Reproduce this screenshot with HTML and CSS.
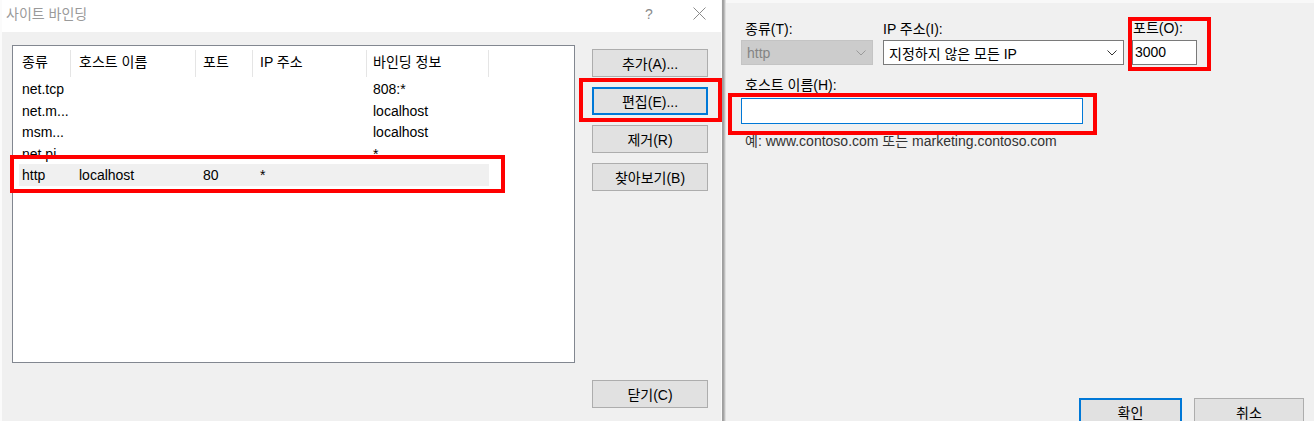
FILE: index.html
```html
<!DOCTYPE html>
<html lang="ko">
<head>
<meta charset="utf-8">
<title>사이트 바인딩</title>
<link rel="stylesheet" href="styles.css">
</head>
<body>
<div class="screen">
  <section class="win-left">
    <header class="titlebar">
      <span class="title">사이트 바인딩</span>
      <div class="title-ctrls">
        <span class="help">?</span>
        <svg class="close-x" width="13" height="13" viewBox="0 0 13 13"><path d="M0.5 0.5 L12.5 12.5 M12.5 0.5 L0.5 12.5"/></svg>
      </div>
    </header>
    <div class="left-body">
      <div class="listbox">
        <div class="lv-head">
          <div class="hcell">종류</div>
          <div class="hcell">호스트 이름</div>
          <div class="hcell">포트</div>
          <div class="hcell">IP 주소</div>
          <div class="hcell">바인딩 정보</div>
        </div>
        <div class="lv-row"><span>net.tcp</span><span></span><span></span><span></span><span>808:*</span></div>
        <div class="lv-row"><span>net.m...</span><span></span><span></span><span></span><span>localhost</span></div>
        <div class="lv-row"><span>msm...</span><span></span><span></span><span></span><span>localhost</span></div>
        <div class="lv-row"><span>net.pi</span><span></span><span></span><span></span><span>*</span></div>
        <div class="lv-row lv-sel"><span>http</span><span>localhost</span><span>80</span><span>*</span><span></span></div>
      </div>
      <div class="btn-col">
        <button class="btn">추가(A)...</button>
        <button class="btn btn-focus">편집(E)...</button>
        <button class="btn">제거(R)</button>
        <button class="btn">찾아보기(B)</button>
      </div>
      <div class="close-cell">
        <button class="btn">닫기(C)</button>
      </div>
    </div>
  </section>
  <div class="win-sep"></div>
  <section class="win-right">
    <div class="field-row">
      <div class="field f-type">
        <label class="lbl lbl-type">종류(T):</label>
        <div class="select select-disabled">
          <span>http</span>
          <svg class="chev" width="10" height="6" viewBox="0 0 10 6"><polyline points="0.5,0.5 5,5 9.5,0.5"/></svg>
        </div>
      </div>
      <div class="field f-ip">
        <label class="lbl">IP 주소(I):</label>
        <div class="select">
          <span>지정하지 않은 모든 IP</span>
          <svg class="chev" width="10" height="6" viewBox="0 0 10 6"><polyline points="0.5,0.5 5,5 9.5,0.5"/></svg>
        </div>
      </div>
      <div class="field f-port">
        <label class="lbl lbl-port">포트(O):</label>
        <div class="textbox">3000</div>
      </div>
    </div>
    <label class="lbl lbl-host">호스트 이름(H):</label>
    <div class="textbox host-box"></div>
    <p class="example">예: www.contoso.com 또는 marketing.contoso.com</p>
    <div class="dlg-buttons">
      <button class="btn btn-focus btn-ok">확인</button>
      <button class="btn btn-cancel">취소</button>
    </div>
  </section>

  <div class="mark mark-row"></div>
  <div class="mark mark-edit"></div>
  <div class="mark mark-port"></div>
  <div class="mark mark-host"></div>
</div>
</body>
</html>
```

FILE: styles.css
```css
* { box-sizing: border-box; }

body {
  margin: 0;
  font-family: "Liberation Sans", "Noto Sans CJK KR", sans-serif;
  font-size: 14px;
  color: #000;
  overflow: hidden;
}

.screen {
  position: relative;
  display: flex;
  width: 1314px;
  height: 421px;
  overflow: hidden;
}

/* ---------- left window ---------- */
.win-left {
  width: 721px;
  flex: none;
  border-left: 2px solid #fbfbfb;
  background: #f0f0f0;
  display: flex;
  flex-direction: column;
}

.titlebar {
  height: 32px;
  flex: none;
  background: #fff;
  display: flex;
  justify-content: space-between;
  align-items: flex-start;
  padding-left: 4px;
  padding-right: 15px;
}

.title {
  margin-top: 5px;
  line-height: 18px;
  color: #9a9a9a;
  font-size: 14px;
}

.title-ctrls {
  display: flex;
  align-items: flex-start;
  gap: 40px;
  margin-top: 7px;
}

.help {
  font-size: 14px;
  line-height: 14px;
  color: #8a8a8a;
  width: 8px;
}

.close-x {
  display: block;
  fill: none;
  stroke: #8a8a8a;
  stroke-width: 1;
}

.left-body {
  display: grid;
  grid-template-columns: 563px 116px;
  grid-template-rows: 318px auto;
  column-gap: 17px;
  row-gap: 17px;
  padding: 13px 0 0 10px;
}

.listbox {
  background: #fff;
  border: 1px solid #828790;
  overflow: hidden;
}

.lv-head {
  display: grid;
  grid-template-columns: 58px 125px 57px 114px 122px;
  height: 32px;
}

.hcell {
  margin-top: 4px;
  height: 27px;
  line-height: 24px;
  padding-left: 8px;
  border-right: 1px solid #e5e5e5;
  white-space: nowrap;
}

.hcell:first-child { padding-left: 9px; }
.hcell:nth-child(3), .hcell:nth-child(4) { padding-left: 7px; }
.hcell:nth-child(5) { padding-left: 6px; }

.lv-row {
  display: grid;
  grid-template-columns: 52px 125px 57px 114px 122px;
  margin-left: 6px;
  width: 470px;
  height: 21.5px;
  line-height: 22px;
}

.lv-row span { white-space: nowrap; padding-left: 7px; }
.lv-row span:first-child { padding-left: 3px; }
.lv-row span:nth-child(2) { padding-left: 8px; }
.lv-row span:nth-child(5) { padding-left: 6px; }

.lv-sel { background: #f0f0f0; }

.btn-col {
  display: flex;
  flex-direction: column;
  gap: 10px;
  padding-top: 4px;
}

.btn {
  height: 28px;
  width: 116px;
  padding: 0;
  background: #e1e1e1;
  border: 1px solid #adadad;
  font-family: "Liberation Sans", "Noto Sans CJK KR", sans-serif;
  font-size: 14px;
  color: #000;
}

.btn-focus { border: 2px solid #0078d7; }

.close-cell { grid-column: 2; }

/* ---------- separator ---------- */
.win-sep {
  width: 5px;
  flex: none;
  background: linear-gradient(to right, #fafafa 0, #fafafa 1px, #9c9c9c 1px, #a8a8a8 3px, #d6d6d6 4px, #e6e6e6 5px);
}

/* ---------- right window ---------- */
.win-right {
  flex: 1;
  background: #f0f0f0;
  border-top: 3px solid #f8f8f8;
  display: flex;
  flex-direction: column;
  align-items: flex-start;
  padding-left: 15px;
  padding-right: 10px;
}

.field-row {
  display: flex;
  margin-top: 17px;
}

.field { display: flex; flex-direction: column; }
.f-type { width: 132px; }
.f-ip { width: 241px; margin-left: 10px; }
.f-port { width: 65px; margin-left: 8px; }

.lbl {
  line-height: 18px;
  height: 18px;
  white-space: nowrap;
  margin-bottom: 2px;
}

.lbl-type { padding-left: 4px; }
.lbl-port { padding-left: 1px; margin-top: -1px; margin-bottom: 3px; }

.select {
  height: 25px;
  display: flex;
  align-items: center;
  justify-content: space-between;
  padding: 0 6px 0 5px;
  background: #fff;
  border: 1px solid #7a7a7a;
  white-space: nowrap;
}

.select-disabled {
  background: #cccccc;
  border-color: #c4c4c4;
  color: #848484;
}

.chev {
  fill: none;
  stroke: #333;
  stroke-width: 1;
  flex: none;
}

.select-disabled .chev { stroke: #9a9a9a; }

.textbox {
  height: 25px;
  line-height: 23px;
  padding-left: 2px;
  background: #fff;
  border: 1px solid #7a7a7a;
}

.lbl-host {
  margin-top: 11px;
  padding-left: 4px;
  margin-bottom: 4px;
}

.host-box {
  width: 342px;
  height: 26px;
  border-color: #0078d7;
}

.example {
  margin: 8px 0 0 4px;
  line-height: 18px;
  color: #333;
}

.dlg-buttons {
  margin-top: auto;
  margin-bottom: -5px;
  align-self: flex-end;
  display: flex;
  gap: 12px;
}

.btn-ok { width: 103px; }
.btn-cancel { width: 110px; }

/* ---------- annotation marks ---------- */
.mark {
  position: absolute;
  border: 4px solid #ff0000;
}

.mark-row { left: 10px; top: 155px; width: 495px; height: 38px; }
.mark-edit { left: 579px; top: 78px; width: 143px; height: 44px; }
.mark-port { left: 1128px; top: 17px; width: 83px; height: 54px; }
.mark-host { left: 728px; top: 93px; width: 369px; height: 42px; }
```
